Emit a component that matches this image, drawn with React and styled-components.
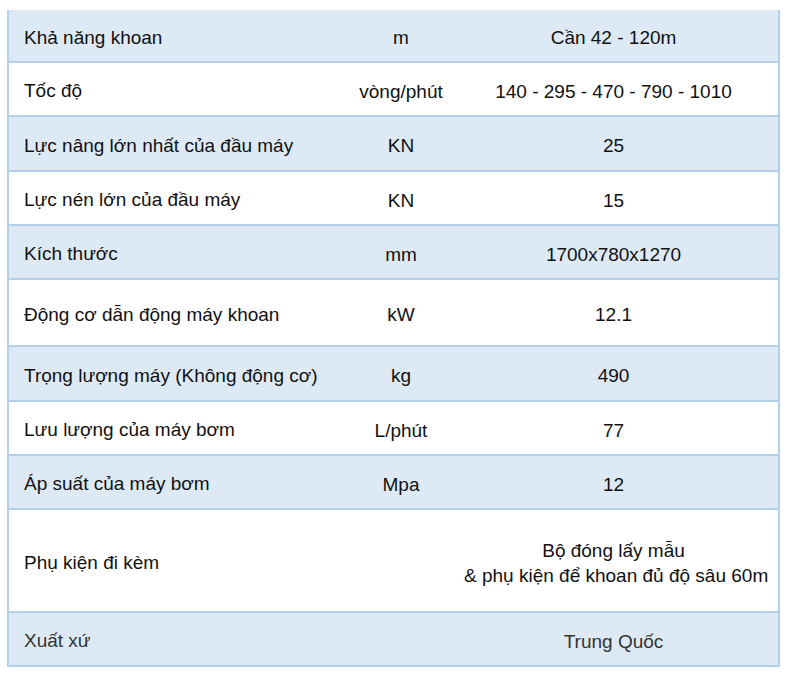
import styled, { createGlobalStyle } from "styled-components";

const GlobalStyle = createGlobalStyle`
  body {
    margin: 0;
    background: #ffffff;
    font-family: "Liberation Sans", Arial, sans-serif;
  }
`;

const Page = styled.div`
  padding: 10px 0 0 7px;
`;

const Table = styled.div`
  width: 773px;
  box-sizing: border-box;
  border-left: 2px solid #b3cfec;
  border-right: 2px solid #b3cfec;
`;

const Row = styled.div`
  display: grid;
  grid-template-columns: 344px 96px 1fr;
  align-items: center;
  height: ${(p) => p.$h}px;
  box-sizing: border-box;
  padding-top: 4px;
  background: ${(p) => (p.$shaded ? "#ddeaf6" : "#ffffff")};
  border-bottom: 2px solid #b3cfec;
  font-size: 19px;
  color: ${(p) => (p.$muted ? "#333333" : "#111111")};
`;

const Label = styled.div`
  padding-left: 15px;
`;

const Cell = styled.div`
  text-align: center;
  line-height: 25px;
  white-space: pre;
`;

const rows = [
  ["Khả năng khoan", "m", "Cần 42 - 120m", 53],
  ["Tốc độ", "vòng/phút", "140 - 295 - 470 - 790 - 1010", 54],
  ["Lực nâng lớn nhất của đầu máy", "KN", "25", 55],
  ["Lực nén lớn của đầu máy", "KN", "15", 54],
  ["Kích thước", "mm", "1700x780x1270", 54],
  ["Động cơ dẫn động máy khoan", "kW", "12.1", 67],
  ["Trọng lượng máy (Không động cơ)", "kg", "490", 55],
  ["Lưu lượng của máy bơm", "L/phút", "77", 54],
  ["Áp suất của máy bơm", "Mpa", "12", 54],
  ["Phụ kiện đi kèm", "", "Bộ đóng lấy mẫu\n & phụ kiện để khoan đủ độ sâu 60m", 103],
  ["Xuất xứ", "", "Trung Quốc", 54],
];

export default function App() {
  return (
    <>
      <GlobalStyle />
      <Page>
        <Table>
          {rows.map(([label, unit, value, h], i) => (
            <Row key={label} $h={h} $shaded={i % 2 === 0} $muted={i === rows.length - 1}>
              <Label>{label}</Label>
              <Cell>{unit}</Cell>
              <Cell>{value}</Cell>
            </Row>
          ))}
        </Table>
      </Page>
    </>
  );
}
